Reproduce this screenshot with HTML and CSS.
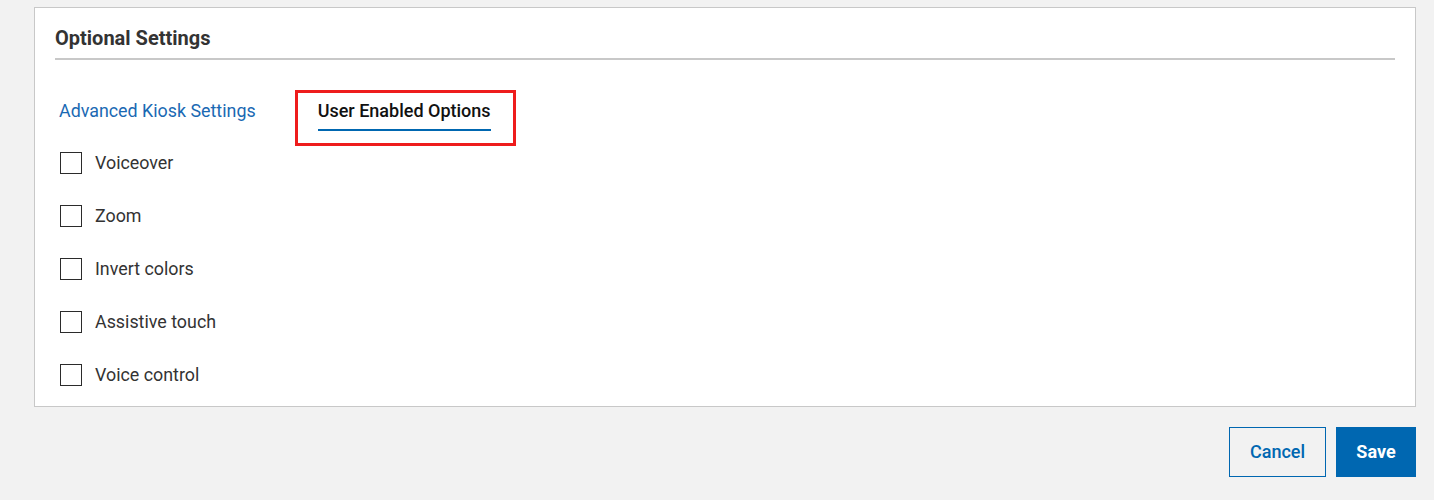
FILE: index.html
```html
<!DOCTYPE html>
<html lang="en">
<head>
<meta charset="utf-8">
<title>Optional Settings</title>
<link rel="stylesheet" href="styles.css">
</head>
<body>
<div class="page">
  <section class="card">
    <h2 class="card-title">Optional Settings</h2>
    <div class="tabs">
      <a class="tab" href="#">Advanced Kiosk Settings</a>
      <div class="tab-highlight">
        <span class="tab tab-active">User Enabled Options</span>
      </div>
    </div>
    <ul class="options">
      <li class="option"><span class="checkbox"></span><span class="option-label">Voiceover</span></li>
      <li class="option"><span class="checkbox"></span><span class="option-label">Zoom</span></li>
      <li class="option"><span class="checkbox"></span><span class="option-label">Invert colors</span></li>
      <li class="option"><span class="checkbox"></span><span class="option-label">Assistive touch</span></li>
      <li class="option"><span class="checkbox"></span><span class="option-label">Voice control</span></li>
    </ul>
  </section>
  <div class="actions">
    <button class="btn btn-secondary">Cancel</button>
    <button class="btn btn-primary">Save</button>
  </div>
</div>
</body>
</html>
```

FILE: styles.css
```css
* { box-sizing: border-box; }
html, body {
  margin: 0;
  padding: 0;
  background: #f2f2f2;
  font-family: Roboto, "Liberation Sans", Arial, sans-serif;
  color: #333;
}
.page {
  padding: 7px 18px 0 34px;
}
.card {
  background: #fff;
  border: 1px solid #c8c8c8;
  padding: 18px 20px 19px 20px;
}
.card-title {
  margin: 0;
  font-size: 20px;
  line-height: 24px;
  font-weight: 700;
  color: #333;
  padding-bottom: 8px;
  border-bottom: 2px solid #c8c8c8;
}
.tabs {
  display: flex;
  align-items: flex-start;
  margin-top: 30px;
}
.tab {
  font-size: 18px;
  line-height: 24px;
  text-decoration: none;
  display: block;
}
.tabs > a.tab {
  color: #1a69b3;
  font-size: 17.85px;
  margin: 9px 0 0 4px;
}
.tab-highlight {
  margin-left: 39px;
  border: 3px solid #ee1c1c;
  padding: 6px 22px 12px 20px;
}
.tab-active {
  color: #111;
  font-weight: 500;
  padding-bottom: 6px;
  border-bottom: 2px solid #0067b1;
}
.options {
  list-style: none;
  margin: 5px 0 0 0;
  padding: 0 0 0 5px;
  display: flex;
  flex-direction: column;
  gap: 29px;
}
.option {
  display: flex;
  align-items: center;
  height: 24px;
}
.checkbox {
  width: 22px;
  height: 22px;
  border: 1.5px solid #2b2b2b;
  background: #fff;
  flex: none;
}
.option-label {
  margin-left: 13px;
  font-size: 17.85px;
  line-height: 24px;
  color: #333;
}
.actions {
  display: flex;
  justify-content: flex-end;
  gap: 10px;
  margin-top: 20px;
}
.btn {
  height: 50px;
  padding: 0 0 2px 0;
  font-family: Roboto, "Liberation Sans", Arial, sans-serif;
  font-size: 18px;
  border-radius: 0;
  cursor: pointer;
}
.btn-secondary {
  width: 97px;
  background: transparent;
  border: 1px solid #0067b1;
  color: #0067b1;
  font-weight: 500;
}
.btn-primary {
  width: 80px;
  background: #0067b1;
  border: 1px solid #0067b1;
  color: #fff;
  font-weight: 700;
}
```
